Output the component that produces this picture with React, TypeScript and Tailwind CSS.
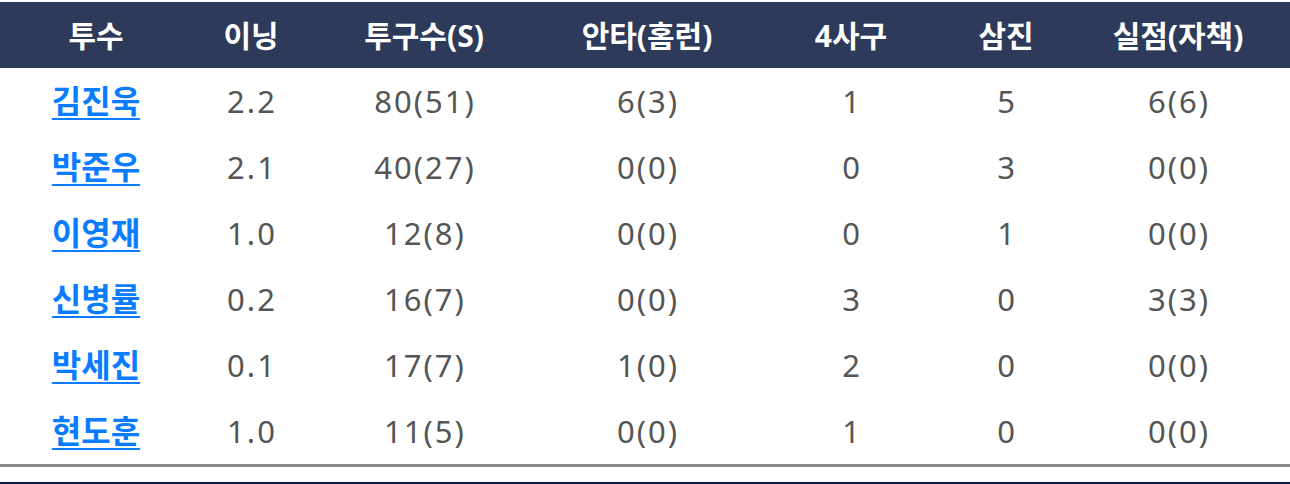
const headers = ["투수", "이닝", "투구수(S)", "안타(홈런)", "4사구", "삼진", "실점(자책)"];

const rows = [
  ["김진욱", "2.2", "80(51)", "6(3)", "1", "5", "6(6)"],
  ["박준우", "2.1", "40(27)", "0(0)", "0", "3", "0(0)"],
  ["이영재", "1.0", "12(8)", "0(0)", "0", "1", "0(0)"],
  ["신병률", "0.2", "16(7)", "0(0)", "3", "0", "3(3)"],
  ["박세진", "0.1", "17(7)", "1(0)", "2", "0", "0(0)"],
  ["현도훈", "1.0", "11(5)", "0(0)", "1", "0", "0(0)"],
];

const grid = "grid grid-cols-[192px_118px_228px_218px_190px_120px_1fr]";

export default function App() {
  return (
    <div className="w-[1290px] h-[484px] bg-white pt-[2px] font-['Noto_Sans','Noto_Sans_CJK_KR',sans-serif] overflow-hidden">
      <div className={`${grid} h-[66px] bg-[#2e3a59] text-white text-[30px] font-bold`}>
        {headers.map((h) => (
          <div key={h} className="flex items-center justify-center">
            {h}
          </div>
        ))}
      </div>

      {rows.map((r) => (
        <div key={r[0]} className={`${grid} h-[66px] text-[31px] text-[#555555]`}>
          {r.map((c, i) =>
            i === 0 ? (
              <div key={i} className="flex items-center justify-center">
                <a href="#" className="text-[32px] text-[#0a7cff] font-bold underline underline-offset-[5px] decoration-2">
                  {c}
                </a>
              </div>
            ) : (
              <div key={i} className="flex items-center justify-center tracking-[2px] pl-[2px]">
                {c}
              </div>
            )
          )}
        </div>
      ))}

      <div className="h-[3px] bg-[#8a8a8a]" />
      <div className="h-[15px]" />
      <div className="h-[2px] bg-[#0b1a4d]" />
    </div>
  );
}
